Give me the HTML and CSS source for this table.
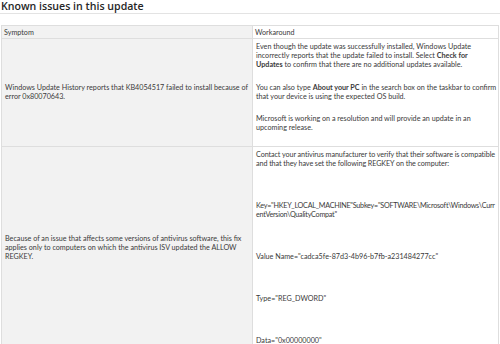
FILE: index.html
```html
<!DOCTYPE html>
<html lang="en">
<head>
    <meta charset="UTF-8">
    <title>Known issues in this update</title>
    <link rel="stylesheet" href="styles.css">
</head>
<body>
    <h2 class="section-title">Known issues in this update</h2>

    <table class="issues-table">
        <colgroup>
            <col class="col-symptom">
            <col class="col-workaround">
        </colgroup>
        <thead>
            <tr>
                <th class="symptom">Symptom</th>
                <th class="workaround">Workaround</th>
            </tr>
        </thead>
        <tbody>
            <tr>
                <td class="symptom">Windows Update History reports that KB4054517 failed to install because of<br>error 0x80070643.</td>
                <td class="workaround">
                    <p>Even though the update was successfully installed, Windows Update<br>incorrectly reports that the update failed to install. Select <b>Check for</b><br><b>Updates</b> to confirm that there are no additional updates available.</p>
                    <p>You can also type <b>About your PC</b> in the search box on the taskbar to confirm<br>that your device is using the expected OS build.</p>
                    <p>Microsoft is working on a resolution and will provide an update in an<br>upcoming release.</p>
                </td>
            </tr>
            <tr>
                <td class="symptom">Because of an issue that affects some versions of antivirus software, this fix<br>applies only to computers on which the antivirus ISV updated the ALLOW<br>REGKEY.</td>
                <td class="workaround regkey">
                    <p class="tight">Contact your antivirus manufacturer to verify that their software is compatible<br>and that they have set the following REGKEY on the computer:</p>
                    <p class="tighter">Key="HKEY_LOCAL_MACHINE"Subkey="SOFTWARE\Microsoft\Windows\Curr<br>entVersion\QualityCompat"</p>
                    <p>Value Name="cadca5fe-87d3-4b96-b7fb-a231484277cc"</p>
                    <p>Type="REG_DWORD"</p>
                    <p>Data="0x00000000"</p>
                </td>
            </tr>
        </tbody>
    </table>
</body>
</html>
```

FILE: styles.css
```css
/* Page */
body {
    margin: 0;
    font-family: "Lato", "Open Sans", sans-serif;
    color: #3a3a3a;
    background-color: #ffffff;
}

/* Section heading with the thin rule under it */
.section-title {
    margin: 0 0 11px 0;
    padding: 0 0 0 1px;
    height: 13px;
    font-family: "Open Sans", sans-serif;
    font-size: 10.6px;
    line-height: 13px;
    font-weight: 600;
    color: #262626;
    border-bottom: 1px solid #e3e3e3;
}

/* Table */
.issues-table {
    margin-left: 1px;
    width: 497px;
    table-layout: fixed;
    border-collapse: collapse;
    font-size: 7.2px;
    line-height: 9px;
}

.col-symptom {
    width: 251px;
}

.col-workaround {
    width: 246px;
}

.issues-table th,
.issues-table td {
    border: 1px solid #dedede;
    padding: 3px 0 0 3px;
    text-align: left;
    font-weight: normal;
    white-space: nowrap;
}

.issues-table th {
    padding: 2px 2px 1px 2px;
    vertical-align: middle;
}

.symptom {
    background-color: #f2f2f2;
    vertical-align: middle;
}

td.symptom {
    padding-bottom: 3px;
}

.workaround {
    background-color: #ffffff;
    vertical-align: top;
}

.workaround p {
    margin: 0 0 13.5px 0;
}

/* The registry block has big gaps between its lines */
.regkey p {
    margin-bottom: 33px;
}

.regkey p:last-child {
    margin-bottom: 3px;
}

/* long lines squeezed so they stay inside the cell */
.workaround .tight {
    letter-spacing: -0.08px;
}

.workaround .tighter {
    letter-spacing: -0.25px;
}
```
